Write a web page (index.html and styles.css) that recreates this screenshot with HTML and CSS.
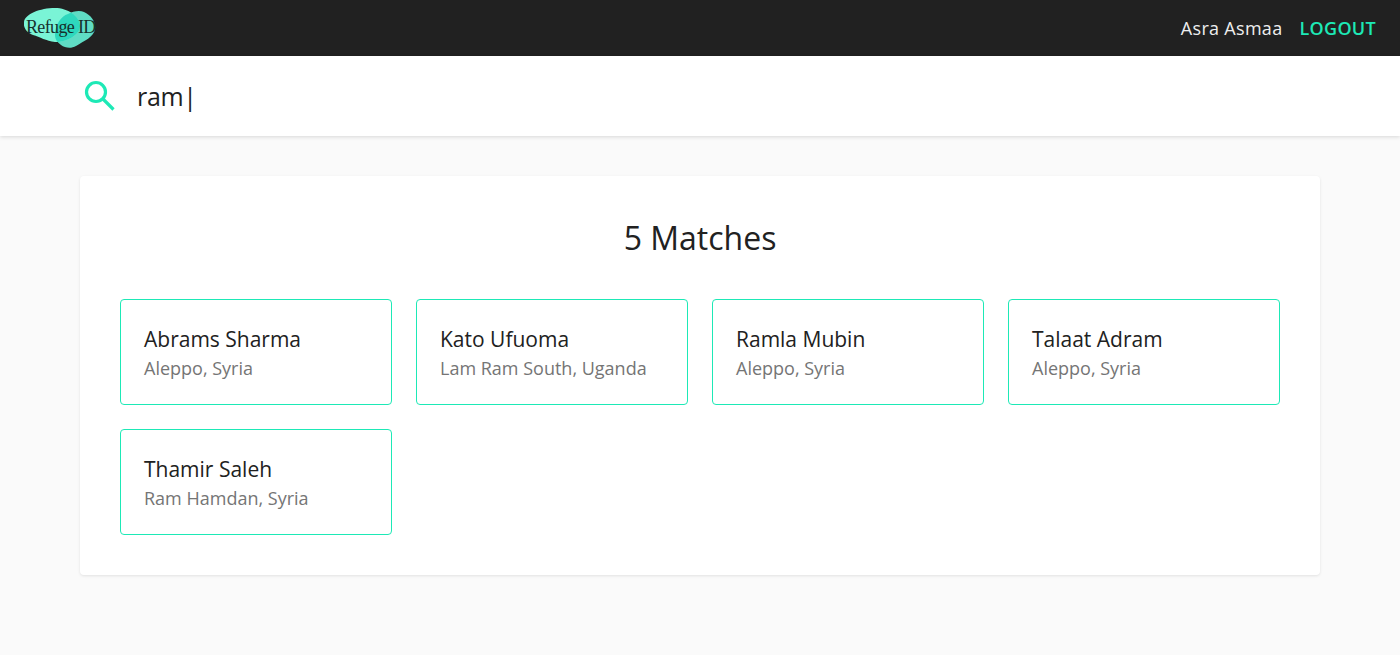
FILE: index.html
```html
<!DOCTYPE html>
<html lang="en">
<head>
  <meta charset="UTF-8" />
  <title>Refuge ID</title>
  <link rel="stylesheet" href="styles.css">
</head>
<body>
  <header class="topbar">
    <a class="logo" href="#">
      <svg class="logo-blobs" width="72" height="40" viewBox="0 0 72 40">
        <defs>
          <clipPath id="frontClip">
            <path d="M0 14C1 6 16 0 31 0C44 0 55 8 56 17C57 26 44 34 31 34C22 33 16 29 9 27C3 25 -1 20 0 14Z" />
          </clipPath>
        </defs>
        <path class="blob-back" d="M31 27C31 17 37 8 44 6C49 3 56 2 60 4C67 7 72 14 71 21C70 29 60 33 52 38C47 41 41 40 37 37C33 34 31 31 31 27Z" />
        <path class="blob-front" d="M0 14C1 6 16 0 31 0C44 0 55 8 56 17C57 26 44 34 31 34C22 33 16 29 9 27C3 25 -1 20 0 14Z" />
        <path class="blob-mid" clip-path="url(#frontClip)" d="M31 27C31 17 37 8 44 6C49 3 56 2 60 4C67 7 72 14 71 21C70 29 60 33 52 38C47 41 41 40 37 37C33 34 31 31 31 27Z" />
      </svg>
      <span class="logo-text">Refuge ID</span>
    </a>
    <nav class="user-nav">
      <span class="user-name">Asra Asmaa</span>
      <a class="logout" href="#">LOGOUT</a>
    </nav>
  </header>

  <div class="search-bar">
    <svg class="search-icon" width="40" height="40" viewBox="0 0 40 40">
      <circle cx="16" cy="16" r="9.5" />
      <line x1="23" y1="23" x2="33.5" y2="33.5" />
    </svg>
    <span class="search-text">ram|</span>
  </div>

  <main class="results">
    <h1>5 Matches</h1>
    <div class="match-grid">
      <a class="match-card" href="#">
        <div class="match-name">Abrams Sharma</div>
        <div class="match-place">Aleppo, Syria</div>
      </a>
      <a class="match-card" href="#">
        <div class="match-name">Kato Ufuoma</div>
        <div class="match-place">Lam Ram South, Uganda</div>
      </a>
      <a class="match-card" href="#">
        <div class="match-name">Ramla Mubin</div>
        <div class="match-place">Aleppo, Syria</div>
      </a>
      <a class="match-card" href="#">
        <div class="match-name">Talaat Adram</div>
        <div class="match-place">Aleppo, Syria</div>
      </a>
      <a class="match-card" href="#">
        <div class="match-name">Thamir Saleh</div>
        <div class="match-place">Ram Hamdan, Syria</div>
      </a>
    </div>
  </main>
</body>
</html>
```

FILE: styles.css
```css
* {
  box-sizing: border-box;
}
body {
  margin: 0;
  min-height: 655px;
  font-family: 'Open Sans', sans-serif;
  background-color: #fafafa;
  color: #212121;
}
a {
  text-decoration: none;
  color: inherit;
}
.topbar {
  display: flex;
  align-items: center;
  justify-content: space-between;
  height: 56px;
  padding: 0 24px;
  background-color: #212121;
}
.logo {
  position: relative;
  display: block;
  width: 72px;
  height: 40px;
}
.logo-blobs {
  display: block;
}
.blob-back {
  fill: #5fdcc4;
}
.blob-front {
  fill: #7af4d6;
}
.blob-mid {
  fill: #2ed8bd;
}
.logo-text {
  position: absolute;
  left: 2px;
  top: 8px;
  font-family: 'Liberation Serif', serif;
  font-size: 18px;
  line-height: 22px;
  letter-spacing: -0.65px;
  white-space: nowrap;
  color: #16302c;
}
.user-nav {
  display: flex;
  align-items: center;
  gap: 17px;
  font-size: 18px;
}
.user-name {
  letter-spacing: 0.3px;
  color: #eeeeee;
}
.logout {
  font-weight: 600;
  letter-spacing: 0.3px;
  color: #1de9b6;
}
.search-bar {
  display: flex;
  align-items: center;
  height: 80px;
  padding-left: 80px;
  background-color: #fff;
  box-shadow: 0 1px 4px rgba(0, 0, 0, 0.14);
}
.search-icon {
  fill: none;
  stroke: #1de9b6;
  stroke-width: 3.2;
}
.search-text {
  margin-left: 17px;
  font-size: 25px;
  letter-spacing: -0.3px;
}
.results {
  width: 1240px;
  margin: 40px auto 0;
  padding: 40px;
  background-color: #fff;
  border-radius: 4px;
  box-shadow: 0 1px 3px rgba(0, 0, 0, 0.1);
}
h1 {
  margin: 0 0 39px;
  text-align: center;
  font-size: 32px;
  font-weight: 400;
  line-height: 44px;
}
.match-grid {
  display: grid;
  grid-template-columns: repeat(4, 1fr);
  gap: 24px;
}
.match-card {
  display: block;
  height: 106px;
  padding: 24px 23px;
  background-color: #fff;
  border: 1px solid #1de9b6;
  border-radius: 4px;
}
.match-name {
  font-size: 21px;
  line-height: 30px;
}
.match-place {
  font-size: 18px;
  line-height: 28px;
  color: #757575;
}
```
